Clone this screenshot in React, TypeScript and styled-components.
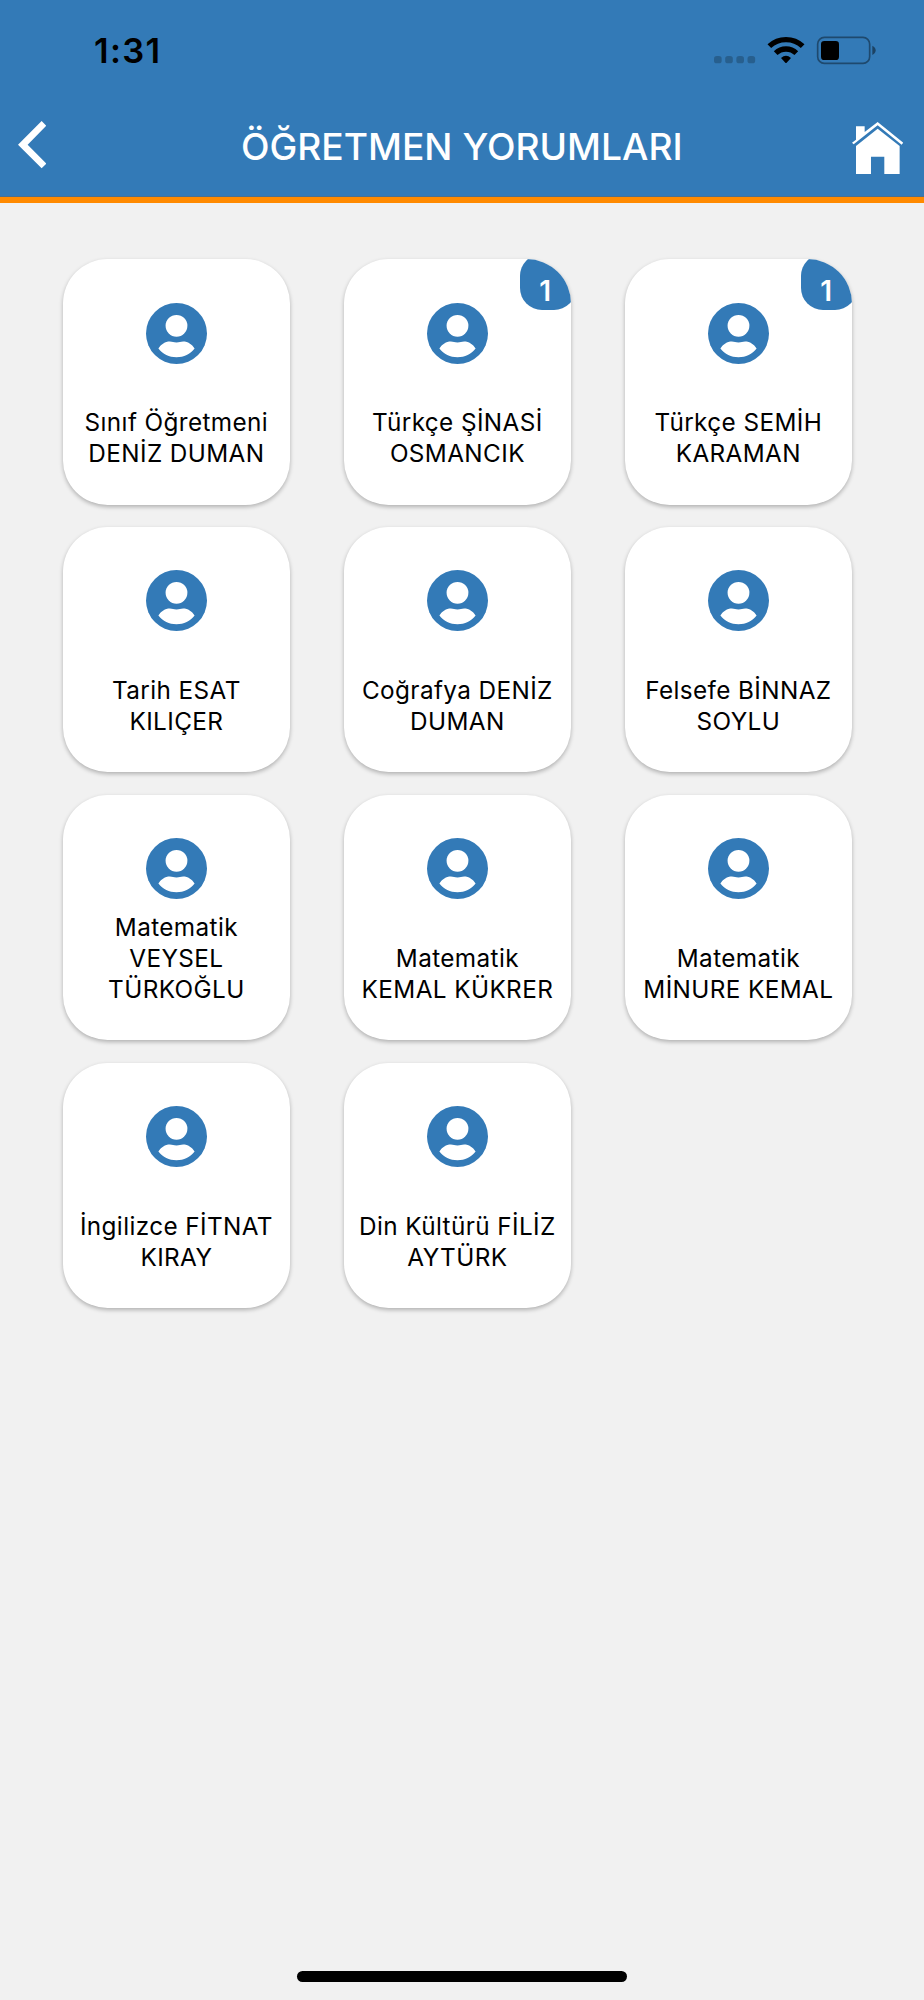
import React from "react";
import styled, { createGlobalStyle } from "styled-components";

const BLUE = "#337ab7";

const GlobalStyle = createGlobalStyle`
  *, *::before, *::after { box-sizing: border-box; }
  body { margin: 0; background: #f1f1f1; font-family: Inter, "Liberation Sans", sans-serif; }
`;

const Screen = styled.div`
  width: 924px;
  height: 2000px;
  display: flex;
  flex-direction: column;
  background: #f1f1f1;
  overflow: hidden;
`;

const Header = styled.header`
  flex: none;
  height: 203px;
  background: ${BLUE};
  border-bottom: 6px solid #ff8a00;
  box-shadow: inset 0 -1px 0 #4d6f8c;
`;

const StatusBar = styled.div`
  height: 98px;
  padding: 0 48px 0 94px;
  display: flex;
  justify-content: space-between;
`;

const Time = styled.time`
  margin-top: 30px;
  height: 42px;
  line-height: 42px;
  font-size: 34.5px;
  font-weight: 600;
  letter-spacing: 1.3px;
  color: #000;
`;

const StatusIcons = styled.svg`
  margin-top: 36px;
  width: 162px;
  height: 29px;
`;

const NavBar = styled.div`
  height: 99px;
  padding: 0 20.5px 0 18px;
  display: flex;
  align-items: center;
  justify-content: space-between;
`;

const NavButton = styled.button<{ $align: "flex-start" | "flex-end"; $shift: number }>`
  width: 56px;
  height: 70px;
  padding: ${({ $shift }) => ($shift > 0 ? `${$shift}px 0 0` : `0 0 ${-$shift}px`)};
  border: 0;
  background: none;
  display: flex;
  align-items: center;
  justify-content: ${({ $align }) => $align};
`;

const Title = styled.h1`
  margin: 0;
  padding: 0 0 2px 2px;
  font-size: 37.2px;
  line-height: 48px;
  font-weight: 500;
  letter-spacing: 0;
  white-space: nowrap;
  color: #fff;
`;

const Grid = styled.main`
  flex: 1;
  padding: 56px 0 0 62.6px;
  display: grid;
  grid-template-columns: repeat(3, 227.6px);
  grid-auto-rows: 245.5px;
  column-gap: 53.4px;
  row-gap: 22.4px;
`;

const CardShell = styled.article`
  position: relative;
  border-radius: 44.6px;
  background: #fff;
  box-shadow: 0 2px 4px rgba(0, 0, 0, 0.27);
`;

const CardBody = styled.div`
  height: 100%;
  padding: 43.5px 0 35px;
  border-radius: inherit;
  overflow: hidden;
  display: flex;
  flex-direction: column;
  align-items: center;
  justify-content: space-between;
`;

const Avatar = styled.svg`
  flex: none;
  width: 61px;
  height: 61px;
`;

const Name = styled.p`
  margin: 0;
  font-size: 24.3px;
  line-height: 31.2px;
  letter-spacing: 0.4px;
  text-align: center;
  color: #000;
`;

const Line = styled.span`
  display: block;
  white-space: nowrap;
`;

const Badge = styled.span`
  position: absolute;
  top: -5px;
  right: -5px;
  width: 56px;
  height: 56px;
  padding: 9px 6px 0 0;
  border-radius: 22px;
  background: ${BLUE};
  color: #fff;
  font-size: 28px;
  font-weight: 600;
  line-height: 56px;
  text-align: center;
`;

const BadgeClip = styled.div`
  position: absolute;
  inset: 0;
  border-radius: inherit;
  overflow: hidden;
`;

const HomeIndicator = styled.div`
  flex: none;
  align-self: center;
  width: 330px;
  height: 11px;
  margin-bottom: 18px;
  border-radius: 6px;
  background: #000;
`;

const teachers: { lines: string[]; badge?: number }[] = [
  { lines: ["Sınıf Öğretmeni", "DENİZ DUMAN"] },
  { lines: ["Türkçe ŞİNASİ", "OSMANCIK"], badge: 1 },
  { lines: ["Türkçe SEMİH", "KARAMAN"], badge: 1 },
  { lines: ["Tarih ESAT", "KILIÇER"] },
  { lines: ["Coğrafya DENİZ", "DUMAN"] },
  { lines: ["Felsefe BİNNAZ", "SOYLU"] },
  { lines: ["Matematik", "VEYSEL", "TÜRKOĞLU"] },
  { lines: ["Matematik", "KEMAL KÜKRER"] },
  { lines: ["Matematik", "MİNURE KEMAL"] },
  { lines: ["İngilizce FİTNAT", "KIRAY"] },
  { lines: ["Din Kültürü FİLİZ", "AYTÜRK"] },
];

function TeacherCard({ lines, badge }: { lines: string[]; badge?: number }) {
  return (
    <CardShell>
      <CardBody>
        <Avatar viewBox="-91 -91 182 182">
          <circle r="91" fill={BLUE} />
          <circle cy="-23" r="32.5" fill="#fff" />
          <path
            d="M-54 45C-46 32-34 24-20 24C-12 24-9 27 0 27C9 27 12 24 20 24C34 24 46 32 54 45C41 62 22 71 0 71C-22 71-41 62-54 45Z"
            fill="#fff"
          />
        </Avatar>
        <Name>
          {lines.map((line) => (
            <Line key={line}>{line}</Line>
          ))}
        </Name>
      </CardBody>
      {badge !== undefined && (
        <BadgeClip>
          <Badge>{badge}</Badge>
        </BadgeClip>
      )}
    </CardShell>
  );
}

export default function App() {
  return (
    <Screen>
      <GlobalStyle />
      <Header>
        <StatusBar>
          <Time>1:31</Time>
          <StatusIcons viewBox="72 108 486 87">
            <g fill="#000" fillOpacity="0.22">
              <rect x="72" y="168" width="23" height="22" rx="8" />
              <rect x="105.500" y="168" width="23" height="22" rx="8" />
              <rect x="139" y="168" width="23" height="22" rx="8" />
              <rect x="172.500" y="168" width="23" height="22" rx="8" />
            </g>
            <g fill="none" stroke="#000" strokeWidth="16">
              <path d="M238 138.500A73 73 0 0 1 338 138.500" />
              <path d="M257 159.500A45 45 0 0 1 319 159.500" />
            </g>
            <path d="M273 174Q288 161 303 174L290 188Q288 190 286 188Z" />
            <rect x="383" y="112" width="156" height="78" rx="20" fill="none" stroke="#000" strokeOpacity="0.4" strokeWidth="5" />
            <rect x="393" y="123" width="54" height="57" rx="10" />
            <path d="M547 137Q557 142 557 151Q557 160 547 165Z" fillOpacity="0.45" />
          </StatusIcons>
        </StatusBar>
        <NavBar>
          <NavButton $align="flex-start" $shift={-5} aria-label="Geri">
            <svg width="28.300" height="47.300" viewBox="54 364 85 142">
              <path d="M125 364L139 378L83 435L139 492L125 506L54 435Z" fill="#fff" />
            </svg>
          </NavButton>
          <Title>ÖĞRETMEN YORUMLARI</Title>
          <NavButton $align="flex-end" $shift={1} aria-label="Ana sayfa">
            <svg width="51.300" height="52.300" viewBox="486 366 154 157">
              <g fill="#fff">
                <path d="M498 379H524V396L563 366L640 428L635 434L563 376L491 433L486 428L498 419Z" />
                <path d="M563 386L629 438V523H583V470H543V523H498V438Z" />
              </g>
            </svg>
          </NavButton>
        </NavBar>
      </Header>
      <Grid>
        {teachers.map((teacher) => (
          <TeacherCard key={teacher.lines.join(" ")} {...teacher} />
        ))}
      </Grid>
      <HomeIndicator />
    </Screen>
  );
}
